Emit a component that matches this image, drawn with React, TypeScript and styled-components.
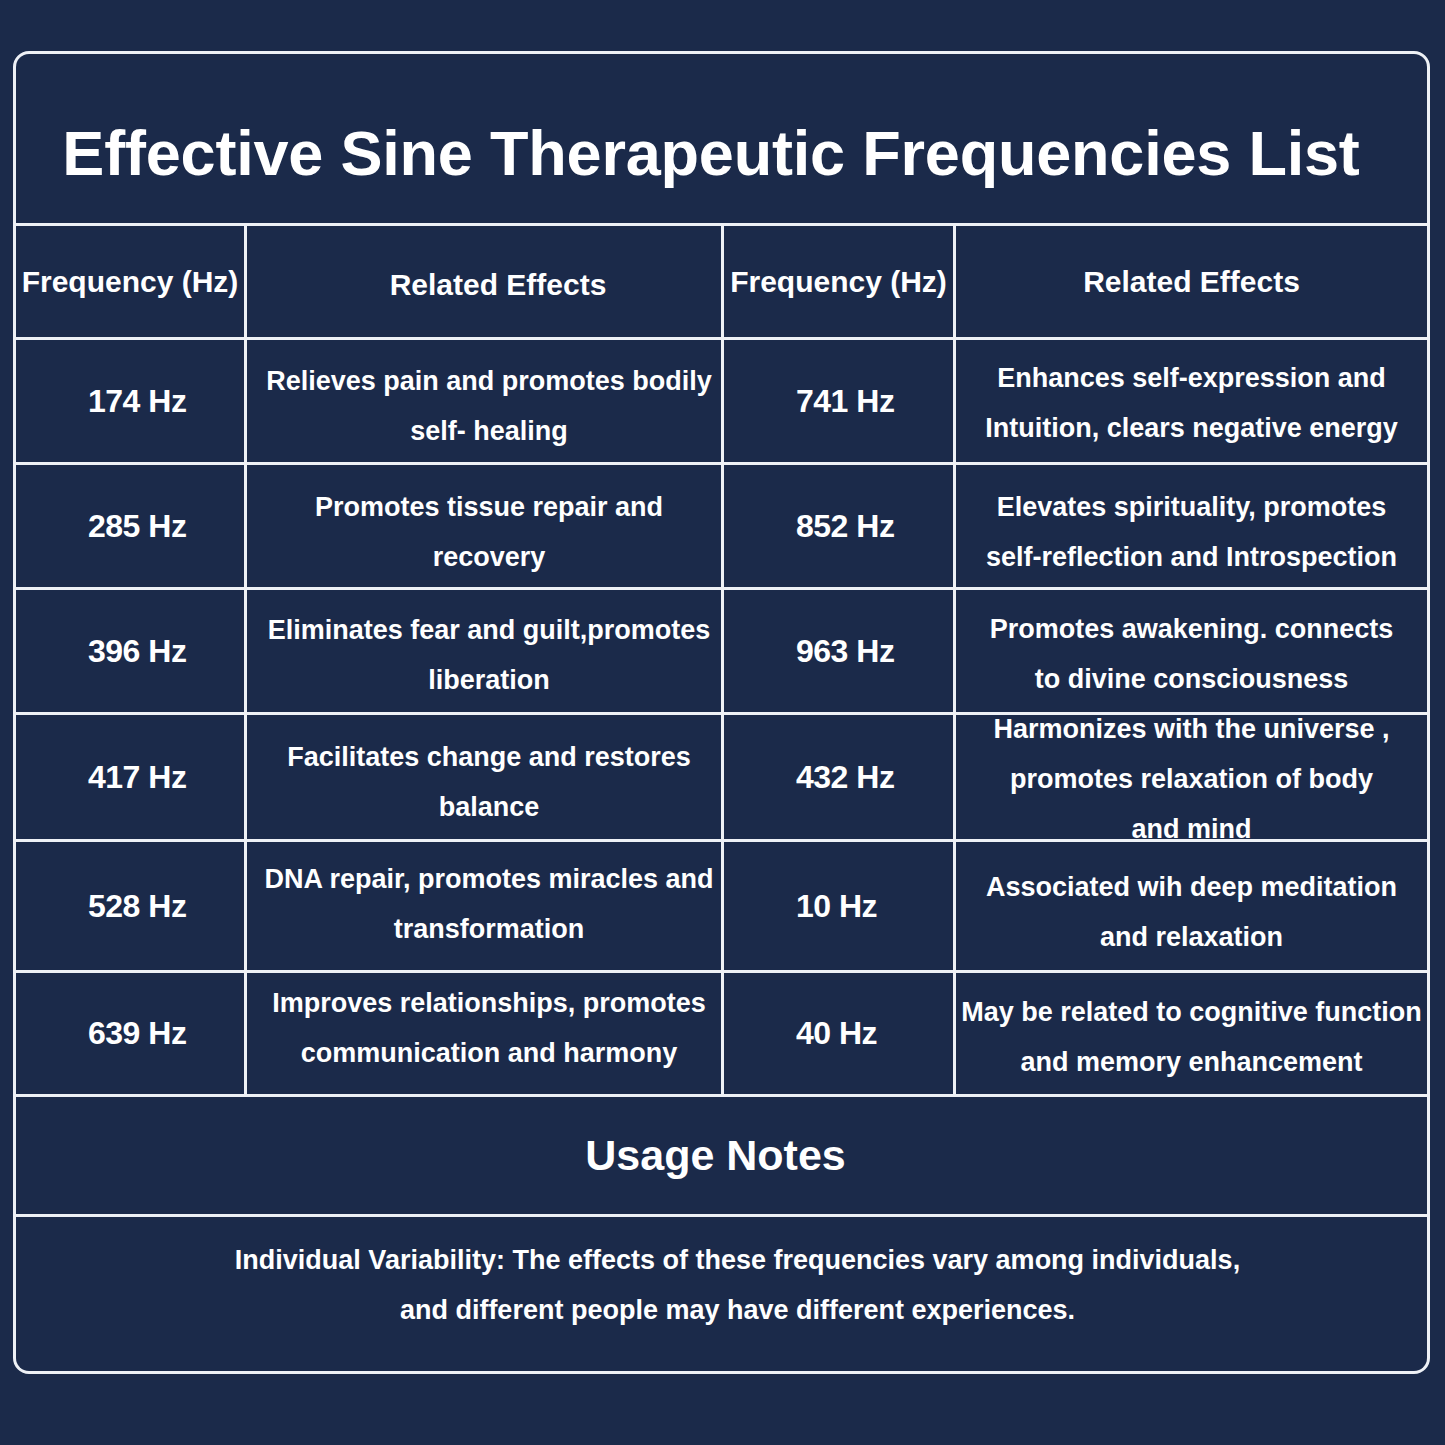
import styled, { createGlobalStyle } from 'styled-components'

const GlobalStyle = createGlobalStyle`
  html, body {
    margin: 0;
    padding: 0;
    background: #1b2a4a;
  }
  body {
    font-family: "Liberation Sans", Arial, sans-serif;
    color: #ffffff;
  }
`

type Effect = {
  lines: string[]
  shift: number
}

type Row = {
  left: string
  leftEffect: Effect
  right: string
  rightEffect: Effect
}

const rows: Row[] = [
  {
    left: '174 Hz',
    leftEffect: { lines: ['Relieves pain and promotes bodily', 'self- healing'], shift: 5 },
    right: '741 Hz',
    rightEffect: { lines: ['Enhances self-expression and', 'Intuition, clears negative energy'], shift: 2 },
  },
  {
    left: '285 Hz',
    leftEffect: { lines: ['Promotes tissue repair and', 'recovery'], shift: 6 },
    right: '852 Hz',
    rightEffect: { lines: ['Elevates spirituality, promotes', 'self-reflection and Introspection'], shift: 6 },
  },
  {
    left: '396 Hz',
    leftEffect: { lines: ['Eliminates fear and guilt,promotes', 'liberation'], shift: 4 },
    right: '963 Hz',
    rightEffect: { lines: ['Promotes awakening. connects', 'to divine consciousness'], shift: 3 },
  },
  {
    left: '417 Hz',
    leftEffect: { lines: ['Facilitates change and restores', 'balance'], shift: 5 },
    right: '432 Hz',
    rightEffect: {
      lines: ['Harmonizes with the universe ,', 'promotes relaxation of body', 'and mind'],
      shift: 2,
    },
  },
  {
    left: '528 Hz',
    leftEffect: { lines: ['DNA repair, promotes miracles and', 'transformation'], shift: -2 },
    right: '10 Hz',
    rightEffect: { lines: ['Associated wih deep meditation', 'and relaxation'], shift: 6 },
  },
  {
    left: '639 Hz',
    leftEffect: { lines: ['Improves relationships, promotes', 'communication and harmony'], shift: -6 },
    right: '40 Hz',
    rightEffect: { lines: ['May be related to cognitive function', 'and memory enhancement'], shift: 3 },
  },
]

const App = () => {
  return (
    <>
      <GlobalStyle />
      <Frame>
        <Title>Effective Sine Therapeutic Frequencies List</Title>

        <HeadCell>Frequency (Hz)</HeadCell>
        <HeadCell $lift $right>Related Effects</HeadCell>
        <HeadCell>Frequency (Hz)</HeadCell>
        <HeadCell>Related Effects</HeadCell>

        {rows.map((row) => (
          <RowGroup key={row.left}>
            <FreqCell>{row.left}</FreqCell>
            <EffectCell $shift={row.leftEffect.shift} $right>
              {row.leftEffect.lines.map((line) => (
                <Line key={line}>{line}</Line>
              ))}
            </EffectCell>
            <FreqCell>{row.right}</FreqCell>
            <EffectCell $shift={row.rightEffect.shift}>
              {row.rightEffect.lines.map((line) => (
                <Line key={line}>{line}</Line>
              ))}
            </EffectCell>
          </RowGroup>
        ))}

        <NotesHeading>Usage Notes</NotesHeading>
        <NotesBody>
          <Line>
            Individual Variability: The effects of these frequencies vary among
            individuals,
          </Line>
          <Line>and different people may have different experiences.</Line>
        </NotesBody>
      </Frame>
    </>
  )
}

const Frame = styled.div`
  box-sizing: border-box;
  width: 1417px;
  margin: 51px 0 0 13px;
  display: grid;
  grid-template-columns: 228px 474px 229px 471px;
  grid-template-rows: 169px 111px 122px 122px 122px 124px 128px 121px 117px 154px;
  gap: 3px;
  background: #eef1f6;
  border: 3px solid #eef1f6;
  border-radius: 16px;
  overflow: hidden;
`

const Cell = styled.div`
  box-sizing: border-box;
  background: #1b2a4a;
  display: flex;
  align-items: center;
  justify-content: center;
  font-weight: 700;
  color: #ffffff;
  min-width: 0;
`

const Title = styled(Cell)`
  grid-column: 1 / -1;
  padding: 28px 21px 0 0;
  font-size: 63px;
  letter-spacing: -0.2px;
  white-space: nowrap;
`

const HeadCell = styled(Cell)<{ $lift?: boolean; $right?: boolean }>`
  font-size: 30px;
  white-space: nowrap;
  padding-top: ${(p) => (p.$lift ? '6px' : '0')};
  padding-left: ${(p) => (p.$right ? '28px' : '0')};
`

const RowGroup = styled.div`
  display: contents;
`

const FreqCell = styled(Cell)`
  justify-content: flex-start;
  padding-left: 72px;
  font-size: 32px;
  letter-spacing: -0.5px;
`

const EffectCell = styled(Cell)<{ $shift: number; $right?: boolean }>`
  flex-direction: column;
  padding-top: ${(p) => (p.$shift > 0 ? p.$shift * 2 : 0)}px;
  padding-bottom: ${(p) => (p.$shift < 0 ? -p.$shift * 2 : 0)}px;
  padding-left: ${(p) => (p.$right ? '10px' : '0')};
  font-size: 27px;
  line-height: 50px;
  text-align: center;
  white-space: nowrap;
`

const Line = styled.div``

const NotesHeading = styled(Cell)`
  grid-column: 1 / -1;
  padding-right: 12px;
  font-size: 43px;
`

const NotesBody = styled(Cell)`
  grid-column: 1 / -1;
  flex-direction: column;
  justify-content: flex-start;
  padding: 18px 0 0 32px;
  font-size: 27px;
  line-height: 50px;
  white-space: nowrap;
`

export default App
